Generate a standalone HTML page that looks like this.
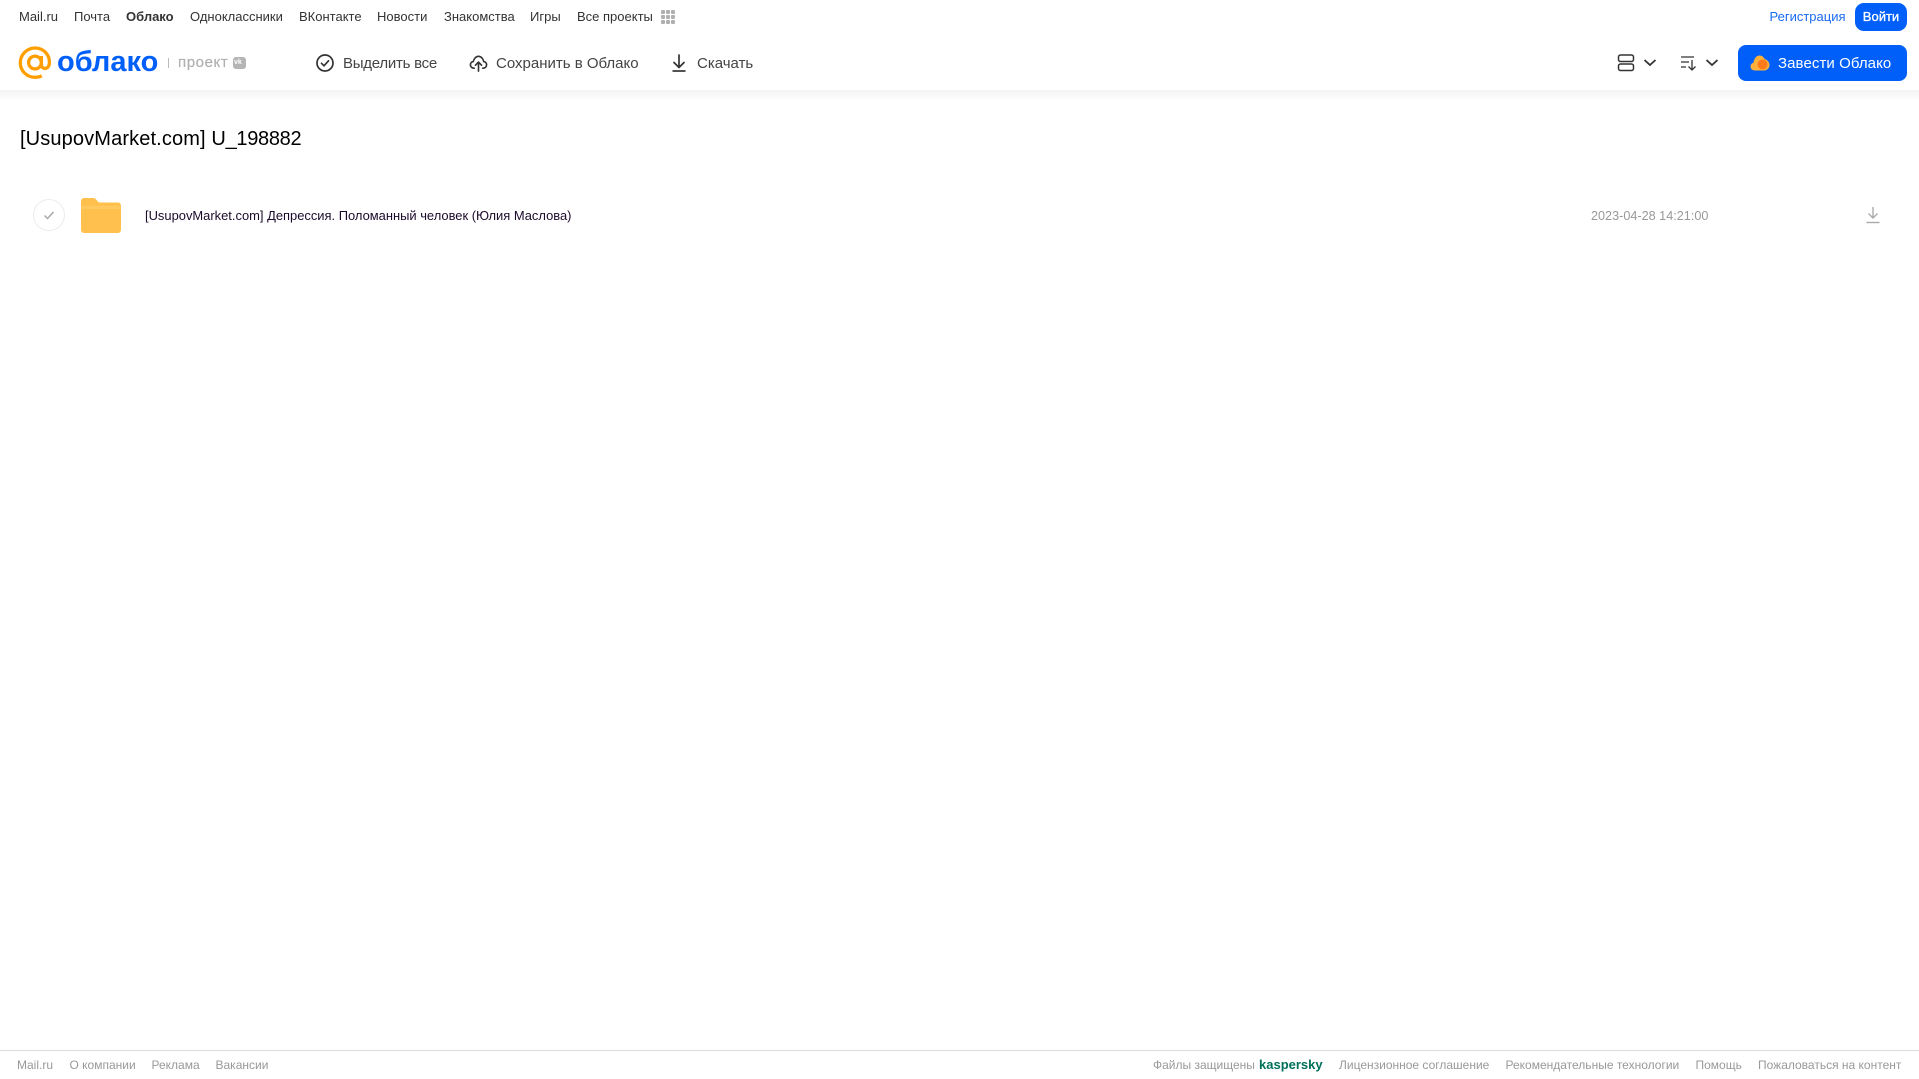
<!DOCTYPE html>
<html lang="ru"><head><meta charset="utf-8"><title>Облако</title>
<style>
html,body{margin:0;padding:0;background:#fff}
body{width:1919px;height:1079px;position:relative;overflow:hidden;font-family:"Liberation Sans",Arial,sans-serif}
.t{position:absolute;white-space:nowrap;line-height:16px}
.n{font-size:13px;color:#333;top:9px}
.b{font-size:15px;color:#444;top:55.5px}
.f{font-size:12px;color:#999;top:1057px}
svg{position:absolute;display:block}
</style></head><body>
<span class="t n" style="left:19px">Mail.ru</span>
<span class="t n" style="left:74px">Почта</span>
<span class="t n" style="left:126px;font-weight:bold">Облако</span>
<span class="t n" style="left:190px">Одноклассники</span>
<span class="t n" style="left:299px">ВКонтакте</span>
<span class="t n" style="left:377px">Новости</span>
<span class="t n" style="left:444px">Знакомства</span>
<span class="t n" style="left:530px">Игры</span>
<span class="t n" style="left:577px">Все проекты</span>
<svg style="left:660px;top:9px" width="16" height="16" fill="#b0b0b0"><rect x="1" y="1" width="4" height="4" rx="1"/><rect x="6" y="1" width="4" height="4" rx="1"/><rect x="11" y="1" width="4" height="4" rx="1"/><rect x="1" y="6" width="4" height="4" rx="1"/><rect x="6" y="6" width="4" height="4" rx="1"/><rect x="11" y="6" width="4" height="4" rx="1"/><rect x="1" y="11" width="4" height="4" rx="1"/><rect x="6" y="11" width="4" height="4" rx="1"/><rect x="11" y="11" width="4" height="4" rx="1"/></svg>
<span class="t n" style="left:1769.500px;color:#1a6cf0">Регистрация</span>
<div style="position:absolute;left:1855px;top:3px;width:52px;height:28px;background:#005ff9;border-radius:9px"></div>
<span class="t" style="left:1855px;top:9px;width:52px;text-align:center;color:#fff;font-size:13px;-webkit-text-stroke:.3px #fff">Войти</span>

<svg style="left:18px;top:46px" width="34" height="34" viewBox="0 0 34 34" fill="none" stroke="#ff9e00" stroke-width="3.300"><circle cx="17" cy="16.500" r="6.400"/><path d="M23.400 10v8.500c0 5.500 7.600 5.500 8-1.500C31.800 8.500 25.300 2 17 2 8.900 2 2.300 8.700 2.300 16.800 2.300 25 8.900 31.300 17 31.300c2.800 0 4.800-.5 6.800-1.500"/></svg>
<span class="t" style="left:57px;top:44px;line-height:36px;font-size:29px;font-weight:bold;color:#005ff9">облако</span>
<div style="position:absolute;left:168px;top:58px;width:1px;height:10px;background:#bbb"></div>
<span class="t" style="left:178px;top:55px;font-size:15px;color:#b0b0b0;letter-spacing:.6px;-webkit-text-stroke:.2px #b0b0b0">проект</span>
<div style="position:absolute;left:233px;top:57px;width:13px;height:12px;background:#b5b5b5;border-radius:3px"></div>
<span class="t" style="left:234px;top:59px;font-size:7px;line-height:8px;font-weight:bold;color:#fff">vk</span>

<svg style="left:315px;top:53px" width="20" height="20" fill="none" stroke="#333" stroke-width="1.700"><circle cx="10" cy="10" r="8"/><path d="M6.500 10.300l2.500 2.500 4.500-5" stroke-linecap="round"/></svg>
<span class="t b" style="left:343px;letter-spacing:-.25px">Выделить все</span>
<svg style="left:469px;top:53px" width="19" height="20" viewBox="0 0 20 20" fill="none" stroke="#333" stroke-width="1.700" stroke-linecap="round" stroke-linejoin="round"><path d="M5.500 15.500C3 15.500 1.500 14 1.500 12c0-2 1.300-3.300 3-3.500C5 5.500 7.300 3 10 3s5 2.500 5.500 5.500c1.700.2 3 1.500 3 3.500s-1.500 3.500-4 3.500"/><path d="M10 18.500v-9M6.800 12.300L10 9l3.200 3.300"/></svg>
<span class="t b" style="left:496px">Сохранить в Облако</span>
<svg style="left:669px;top:53px" width="20" height="20" fill="none" stroke="#333" stroke-width="1.700"><path d="M10 2v12M5 9.500l5 5 5-5" stroke-linecap="round" stroke-linejoin="round"/><path d="M3.500 18h13"/></svg>
<span class="t b" style="left:697px">Скачать</span>

<svg style="left:1617px;top:54px" width="18" height="18" fill="none" stroke="#333" stroke-width="1.500"><rect x="1.500" y="1" width="15" height="6.500" rx="2"/><rect x="1.500" y="10" width="15" height="6.500" rx="2"/></svg>
<svg style="left:1643px;top:58px" width="14" height="10" fill="none" stroke="#333" stroke-width="1.800"><path d="M1.500 2l5.500 5 5.500-5"/></svg>
<svg style="left:1680px;top:54px" width="18" height="18" fill="none" stroke="#333" stroke-width="1.300"><path d="M1 3h13M1 8h8M1 13h5"/><path d="M12 6v10M8.500 12.500l3.500 3.500 3.500-3.500"/></svg>
<svg style="left:1705px;top:58px" width="14" height="10" fill="none" stroke="#333" stroke-width="1.800"><path d="M1.500 2l5.500 5 5.500-5"/></svg>
<div style="position:absolute;left:1738px;top:45px;width:169px;height:36px;background:#005ff9;border-radius:8px"></div>
<svg style="left:1750px;top:54px" width="20" height="18"><path d="M5 16.500C2 16.500.5 14.500.5 12.500.500 10.500 2 9 3.500 8.700 4 4.500 6.500 1.500 9.500 1.500c2.500 0 4.300 1.500 5 3.500 2.500.5 5 3 5 6 0 3-2.300 5.500-5.500 5.500z" fill="#ffb13b"/><circle cx="12.500" cy="10.500" r="5" fill="#ff7a1a"/></svg>
<span class="t" style="left:1778px;top:55.500px;font-size:15px;color:#fff;letter-spacing:.08px">Завести Облако</span>

<div style="position:absolute;left:0;top:90px;width:1919px;height:12px;background:linear-gradient(#f3f3f3,#fff)"></div>

<span class="t" style="left:20px;top:126px;line-height:26px;font-size:20px;color:#000"><span style="letter-spacing:.13px">[UsupovMarket.com] </span><span style="letter-spacing:-.3px">U_198882</span></span>

<div style="position:absolute;left:33px;top:199px;width:30px;height:30px;border:1px solid #ececec;border-radius:50%"></div>
<svg style="left:42px;top:208px" width="14" height="14" fill="none" stroke="#a5a5a5" stroke-width="1.400"><path d="M2.500 7.500l3 3 6-6.500"/></svg>
<svg style="left:80px;top:197px" width="42" height="37"><path d="M1 4a3 3 0 0 1 3-3h9c2 0 3 1 4 2.500S19 5.500 20 5.500h18a3 3 0 0 1 3 3V33a3 3 0 0 1-3 3H4a3 3 0 0 1-3-3z" fill="#ffc04d"/><path d="M1 9h40v3H1z" fill="#ffc95f"/></svg>
<span class="t" style="left:145px;top:208px;font-size:12.930px;color:#1c0a2c">[UsupovMarket.com] Депрессия. Поломанный человек (Юлия Маслова)</span>
<span class="t" style="left:1591px;top:208px;font-size:12.650px;color:#999">2023-04-28 14:21:00</span>
<svg style="left:1865px;top:206px" width="16" height="18" fill="none" stroke="#aaa" stroke-width="1.400"><path d="M8 1v11M3.500 7.500L8 12l4.500-4.500"/><path d="M1.500 16.500h13"/></svg>

<div style="position:absolute;left:0;top:1050px;width:1919px;height:1px;background:#dcdcdc"></div>
<span class="t f" style="left:17px">Mail.ru</span>
<span class="t f" style="left:69.500px">О компании</span>
<span class="t f" style="left:151.500px">Реклама</span>
<span class="t f" style="left:215.500px">Вакансии</span>
<span class="t f" style="left:1153px">Файлы защищены</span>
<span class="t f" style="left:1259px;font-size:13px;font-weight:bold;color:#00705a">kaspersky</span>
<span class="t f" style="left:1339px">Лицензионное соглашение</span>
<span class="t f" style="left:1505.500px">Рекомендательные технологии</span>
<span class="t f" style="left:1695.500px">Помощь</span>
<span class="t f" style="left:1758px">Пожаловаться на контент</span>
</body></html>
